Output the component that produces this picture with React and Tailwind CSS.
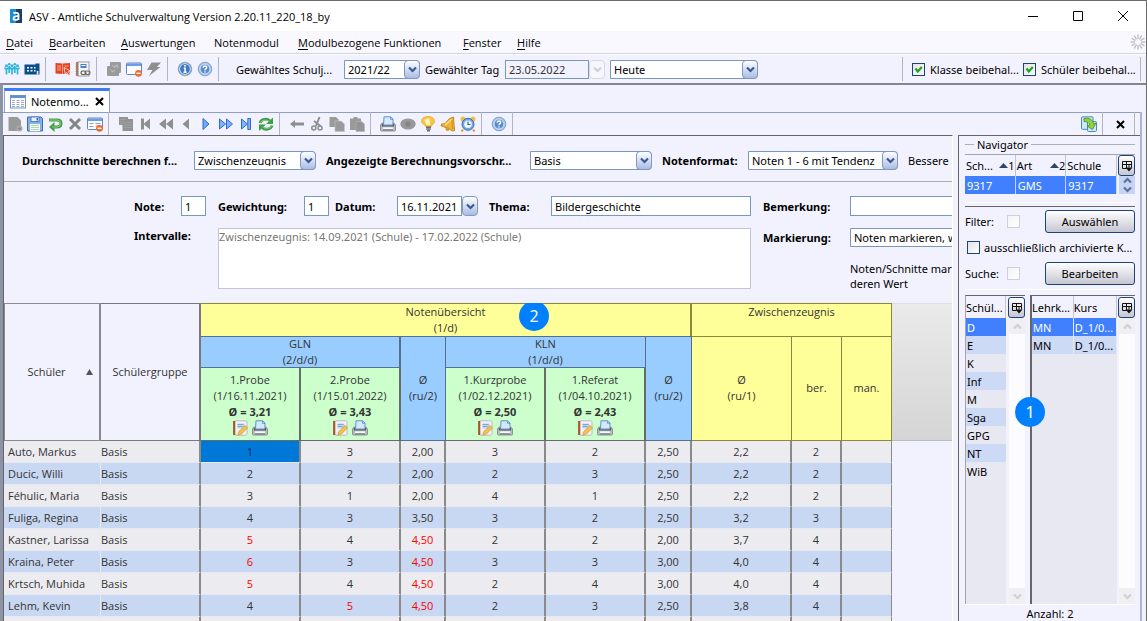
import React, { useState } from 'react';
import clsx from 'clsx';

const menus = [
  { key: 'D', rest: 'atei', width: 'w-[43px]' },
  { key: 'B', rest: 'earbeiten', width: 'w-[72px]' },
  { key: 'A', rest: 'uswertungen', width: 'w-[93px]' },
  { key: '', rest: 'Notenmodul', width: 'w-[84px]' },
  { key: 'M', rest: 'odulbezogene Funktionen', width: 'w-[165px]' },
  { key: 'F', rest: 'enster', width: 'w-[54px]' },
  { key: 'H', rest: 'ilfe', width: 'w-[40px]' },
];

const students = [
  { name: 'Auto, Markus', grades: ['1', '3', '2,00', '3', '2', '2,50', '2,2', '2', ''] },
  { name: 'Ducic, Willi', grades: ['2', '2', '2,00', '2', '3', '2,50', '2,2', '2', ''] },
  { name: 'Féhulic, Maria', grades: ['3', '1', '2,00', '4', '1', '2,50', '2,2', '2', ''] },
  { name: 'Fuliga, Regina', grades: ['4', '3', '3,50', '3', '2', '2,50', '3,2', '3', ''] },
  { name: 'Kastner, Larissa', grades: ['5', '4', '4,50', '2', '2', '2,00', '3,7', '4', ''] },
  { name: 'Kraina, Peter', grades: ['6', '3', '4,50', '3', '3', '3,00', '4,0', '4', ''] },
  { name: 'Krtsch, Muhida', grades: ['5', '4', '4,50', '2', '4', '3,00', '4,0', '4', ''] },
  { name: 'Lehm, Kevin', grades: ['4', '5', '4,50', '2', '3', '2,50', '3,8', '4', ''] },
  { name: '', grades: ['', '', '', '', '', '', '', '', ''] },
];

const subjects = ['D', 'E', 'K', 'Inf', 'M', 'Sga', 'GPG', 'NT', 'WiB'];

const isWeak = (grade) => parseFloat(grade.replace(',', '.')) >= 4.5;

/* ---------- Icons ---------- */

const Icon = ({ children, size = 16 }) => (
  <svg width={size} height={size} viewBox="0 0 16 16" fill="none" aria-hidden="true" className="block shrink-0">
    {children}
  </svg>
);

const AppLogo = () => (
  <Icon>
    <rect x="2" y="1" width="12" height="14" fill="#1b8fd0" />
    <path d="M8 1h6v14H8z" fill="#17406f" />
    <path d="M5.500 5.500c1-1 5-1.300 5 1.200V12M10.500 8.300c-3-.3-5 .2-5 2 0 2.200 4 2.200 5 0" stroke="#fff" strokeWidth="1.800" />
  </Icon>
);

const PeopleIcon = () => (
  <Icon>
    <g fill="#2fb5d8">
      {[2.500, 8, 13.500].map((x) => <circle key={x} cx={x} cy="4.800" r="1.500" />)}
      {[5.200, 10.800].map((x) => <circle key={x} cx={x} cy="3.200" r="1.300" />)}
    </g>
    <path d="M.5 6.500l2 2 2-2M2.500 7.500v6M5.800 6.500l2.200 2 2.200-2M8 8v5.500M11.500 6.500l2 2 2-2M13.500 7.500v6M5.200 5v7M10.800 5v7" stroke="#2fb5d8" strokeWidth="1.700" />
  </Icon>
);

const SchoolIcon = () => (
  <Icon>
    <path d="M.5 3.500h11v-1h4v11H.5z" fill="#0b4f8a" />
    <path d="M3 6h2v1.500H3zM6.500 6h2v1.500h-2zM10 6h1.500v1.500H10zM3 9h2v1.500H3zM6.500 9h2v1.500h-2zM10 9h1.500v1.500H10zM12.800 10h1.500v3.500h-1.500z" fill="#fff" />
  </Icon>
);

const RedBookIcon = () => (
  <Icon>
    <path d="M.5 2l7 .5v10.500l-7-.5zM8 2.500l7-.5v10.500L8 13z" fill="#e2431e" />
    <path d="M2 5h4M2 7h4M2 9h4M9.500 5h4" stroke="#f8b8a4" strokeWidth=".9" />
    <path d="M9 6.500l6.500 3.500-2.300.5 2 3-1.400 1-2-3-1.600 1.600z" fill="#e2431e" stroke="#fff" strokeWidth=".7" />
  </Icon>
);

const NotebookIcon = () => (
  <Icon>
    <rect x="3" y="1" width="11" height="14" fill="#f7f7f7" stroke="#9a9a9a" />
    <path d="M2 1v14" stroke="#a4562e" strokeWidth="1.500" />
    <path d="M.5 3h3M.5 5.500h3M.5 8h3M.5 10.500h3M.5 13h3" stroke="#888" strokeWidth=".8" />
    <path d="M5.500 3h6v4h-6z" fill="#4a7fd0" />
    <path d="M6.500 4.500h4" stroke="#fff" />
    <rect x="6" y="10" width="5" height="3.500" rx="1.700" stroke="#555" strokeWidth="1.200" />
    <rect x="10" y="10" width="5" height="3.500" rx="1.700" stroke="#666" strokeWidth="1.200" />
  </Icon>
);

const GreyCardsIcon = () => (
  <Icon>
    <path d="M5 1h9q1 0 1 1v9q0 1-1 1h-1v2q0 1-1 1H2q-1 0-1-1V6q0-1 1-1h2V2q0-1 1-1z" fill="#9a9a9a" />
    <path d="M4.500 8.500l2 2.500 2.500-2M8 6.500l3-2.500 1 3M6 5h3" stroke="#b9b9b9" strokeWidth="1.200" />
  </Icon>
);

const WindowMinusIcon = ({ lines }) => (
  <Icon>
    <rect x=".5" y="2" width="15" height="11.500" rx="1" fill="#fdfdff" stroke="#5c86c4" />
    <path d="M1 2.500h14V5H1z" fill="#6c9ce4" />
    {lines && <path d="M2.500 7.500h4M8.500 7.500h5M2.500 10.500h4M8.500 10h2" stroke="#8ba1c8" />}
    <circle cx="12.500" cy="12.300" r="3.400" fill="#ee6a2c" />
    <path d="M10.500 12.300h4" stroke="#fff" strokeWidth="1.400" />
  </Icon>
);

const BoltIcon = () => (
  <Icon>
    <path d="M5.500 1.500H15l-4 4.500h3.500L3 15l3.500-6H1z" fill="#8f8f8f" />
  </Icon>
);

const RoundIcon = ({ children }) => (
  <Icon>
    <circle cx="8" cy="8" r="6.800" fill="#5b8fd0" stroke="#8fa6c6" />
    <circle cx="8" cy="8" r="5.400" fill="#4479bd" stroke="#e4eefb" strokeWidth=".9" />
    {children}
  </Icon>
);

const InfoIcon = () => (
  <RoundIcon>
    <path d="M8 4v1.800M6.800 7.200h1.300v3.800M6.500 11.200h3.200" stroke="#fff" strokeWidth="1.500" />
  </RoundIcon>
);

const HelpIcon = () => (
  <Icon>
    <circle cx="8" cy="8" r="6.800" fill="#a8c6ea" stroke="#7da0cc" />
    <circle cx="8" cy="8" r="4.900" fill="#5a8ccb" stroke="#e4eefb" strokeWidth=".8" />
    <path d="M6.200 6.700c0-2.300 3.700-2.200 3.500-.1C9.600 7.800 8 7.600 8 9.200M8 10.300v1.300" stroke="#fff" strokeWidth="1.400" />
  </Icon>
);

const SheetIcon = () => (
  <Icon>
    <rect x=".5" y="1.500" width="15" height="12.500" fill="#fff" stroke="#6d93cb" />
    <path d="M1 2h14v2H1z" fill="#5f8fd6" />
    <path d="M2 6.500h3M6.500 6.500h3M11 6.500h3M2 8.500h3M6.500 8.500h3M11 8.500h3M2 10.500h3M6.500 10.500h3M11 10.500h3M2 12.500h3M6.500 12.500h3M11 12.500h3" stroke="#a4a9bd" />
  </Icon>
);

const NewPageIcon = () => (
  <Icon>
    <path d="M1.500 1h9l3.500 3.500V15h-12.500z" fill="#999" />
    <circle cx="12.500" cy="12.500" r="3" fill="#a9a9a9" />
    <path d="M11 12.500h3M12.500 11v3" stroke="#888" />
  </Icon>
);

const SaveIcon = () => (
  <Icon>
    <path d="M1 1h13l1.500 1.500V15H.5V1z" fill="#7fb0e6" stroke="#3d6cb5" />
    <path d="M4 1h8v4.500H4z" fill="#e8f2fc" stroke="#3d6cb5" strokeWidth=".8" />
    <path d="M9.500 2h1.500v2.500H9.500z" fill="#3d6cb5" />
    <path d="M3 8h10v7H3z" fill="#f7fbf4" />
    <path d="M4 9.500h8M4 11.500h8M4 13.500h8" stroke="#b3d3a8" />
  </Icon>
);

const UndoIcon = () => (
  <Icon>
    <path d="M2 4h8q4 0 4 3.500T10 11H6" stroke="#43a047" strokeWidth="3" />
    <path d="M7.500 6v10L2 11z" fill="#43a047" />
    <path d="M2.500 4h7.500q3.500 0 3.500 3.500T10 11H5" stroke="#8fd08c" strokeWidth=".9" />
  </Icon>
);

const CrossIcon = () => (
  <Icon>
    <path d="M3 3l10 10M13 3L3 13" stroke="#858585" strokeWidth="3" />
  </Icon>
);

const GreyListIcon = () => (
  <Icon>
    <path d="M1 1h9v2h5v12H4.500V9H1z" fill="#929292" />
    <path d="M2 3.500h6M2 5.500h3M2 7.500h3M6 6.500h8M6 9h8M6 11.500h8" stroke="#a6a6a6" strokeWidth=".7" />
  </Icon>
);

const grey = '#8f8f8f';
const FirstIcon = () => <Icon><path d="M3 2.500h3v5l6-5v11l-6-5v5H3z" fill={grey} /></Icon>;
const RewindIcon = () => <Icon><path d="M8 2.500v11L1 8zM15 2.500v11L8 8z" fill={grey} /></Icon>;
const PrevIcon = () => <Icon><path d="M11 2.500v11L4.500 8z" fill={grey} /></Icon>;
const PlayIcon = () => <Icon><path d="M5 2.500v11L11 8z" fill="#6fabf4" stroke="#2b6bd0" /></Icon>;
const ForwardIcon = () => <Icon><path d="M1.500 3v10l6-5zM8.500 3v10l6-5z" fill="#7fb4f6" stroke="#2b6bd0" /></Icon>;
const LastIcon = () => <Icon><path d="M3.500 3v10l6-5zM9.800 2.500h2.700v11H9.800z" fill="#7fb4f6" stroke="#2b6bd0" /></Icon>;

const RefreshIcon = () => (
  <Icon>
    <path d="M2 7c1-4 7-5 10-2" stroke="#3f9d45" strokeWidth="2.800" />
    <path d="M15 1.500V8H8z" fill="#3f9d45" />
    <path d="M14 9.500c-1 4-7 5-10 2" stroke="#3f9d45" strokeWidth="2.800" />
    <path d="M1 15V8.500h7z" fill="#3f9d45" />
    <path d="M2.500 6.500c1.500-2.500 5.500-3.300 9-1M13.500 10c-1.500 2.500-5.500 3.300-9 1" stroke="#8fd08c" strokeWidth="1" />
  </Icon>
);

const BackArrowIcon = () => <Icon><path d="M1 8l5-4v2.500h9v3H6V12z" fill={grey} /></Icon>;

const ScissorsIcon = () => (
  <Icon>
    <path d="M10.500 1L7 10M5 5l6.500 5" stroke={grey} strokeWidth="2" />
    <circle cx="4.800" cy="12" r="2" stroke={grey} strokeWidth="1.600" />
    <circle cx="11" cy="12" r="2" stroke={grey} strokeWidth="1.600" />
  </Icon>
);

const CopyIcon = () => (
  <Icon>
    <path d="M.5 1h6.500l2.500 2.500V11H.5z" fill="#9a9a9a" />
    <path d="M6 5h6l3.500 3v7.500H6z" fill="#9a9a9a" stroke="#c4c4ca" strokeWidth=".6" />
  </Icon>
);

const PasteIcon = () => (
  <Icon>
    <path d="M1 2.500h3.500V1h4v1.500H12V14H1z" fill="#9a9a9a" />
    <path d="M7 5.500h5.500L15.500 8v7.500H7z" fill="#959595" stroke="#b4b4ba" strokeWidth=".6" />
  </Icon>
);

const PrinterIcon = () => (
  <Icon>
    <path d="M2 7h12l1.500 2v5q0 1-1 1h-13q-1 0-1-1V9z" fill="#b9bcc2" stroke="#7c8088" strokeWidth=".8" />
    <path d="M4 .8h6.500L13 3v6H3.500z" fill="#d3e9fd" stroke="#5688c4" strokeWidth=".9" />
    <path d="M10.500 1v2.300H13" stroke="#5688c4" strokeWidth=".8" />
    <path d="M2.500 8v2h11V8" stroke="#53575e" strokeWidth="1.200" />
    <path d="M3 11.300h10v1.700H3z" fill="#f6f7f9" />
    <path d="M3 14h10" stroke="#6f737a" />
  </Icon>
);

const EyeIcon = () => (
  <Icon>
    <ellipse cx="8" cy="8" rx="7.700" ry="5.600" fill="#989898" />
    <circle cx="8" cy="8" r="2.600" fill="#858585" />
  </Icon>
);

const BulbIcon = () => (
  <Icon>
    <path d="M8 .5c4 0 6.500 2 6.500 4.800 0 3-3 3-3.500 5.700H6C5.500 8.300 1.500 8.300 1.500 5.300 1.500 2.500 4 .5 8 .5z" fill="#fbc63d" stroke="#e9a02a" strokeWidth=".7" />
    <path d="M4 4q1.500-2 5.500-1.500L10 9H7z" fill="#fff3c0" />
    <path d="M6 11.300h5M6.200 13h4.600M7 14.800h3" stroke="#6b6b72" strokeWidth="1.500" />
  </Icon>
);

const BellIcon = () => (
  <Icon>
    <path d="M13.500 1l1 13.500-2 .5-4-2.500L1 9.800l.5-1.800L5 7.500l4.500-5z" fill="#efb437" stroke="#b3760f" strokeWidth=".8" />
    <path d="M11.500 3.500L5 9" stroke="#fbe08a" strokeWidth="1.600" />
    <path d="M12 4l.5 9.500" stroke="#d4901a" strokeWidth="1" />
    <circle cx="7.500" cy="13" r="2" fill="#d99a22" />
  </Icon>
);

const AlarmIcon = () => (
  <Icon>
    <circle cx="3" cy="3" r="2.500" fill="#f3bd45" />
    <circle cx="13" cy="3" r="2.500" fill="#f3bd45" />
    <path d="M3 13.500L1.500 15.500M13 13.500l1.500 2" stroke="#d89b2b" strokeWidth="2" />
    <circle cx="8" cy="8.300" r="6" fill="#6fa8e6" stroke="#3b6fb4" />
    <circle cx="8" cy="8.300" r="3.800" fill="#eef6ff" />
    <path d="M8 5.500v3h2.500" stroke="#3b5f94" strokeWidth="1.200" />
  </Icon>
);

const SwapIcon = () => (
  <Icon>
    <rect x=".5" y=".8" width="11.500" height="12.500" rx="1" fill="#cfe6f8" stroke="#4b8ac0" />
    <rect x="6.500" y="5.500" width="9" height="10" rx="1" fill="#cfe6f8" stroke="#4b8ac0" />
    <path d="M3 2.500c5.500-1 9 1.500 9.500 5.500l2.500-1-3.500 6.500L6 10l2.800-.8C8.500 7 6.500 5.500 3 5.500z" fill="#8ed43c" stroke="#3f8d1d" strokeWidth=".8" />
  </Icon>
);

const NoteEditIcon = () => (
  <Icon>
    <rect x="2" y=".8" width="13" height="14.400" rx="1.500" fill="#f4f4f6" stroke="#b9b9c2" />
    <path d="M2.200 1v14" stroke="#a5582c" strokeWidth="2.200" />
    <path d="M5.500 3.500h7v5h-7z" fill="#bcd5f3" />
    <path d="M5.500 4.500h6M5.500 6.500h5" stroke="#6f9bd4" strokeWidth=".8" />
    <path d="M13 5.500l2.500 2.300-6 6.200-3.700 1.200 1-3.700z" fill="#f6c04c" stroke="#c98f2c" strokeWidth=".6" />
  </Icon>
);

const SpinnerIcon = () => (
  <Icon>
    {[0, 30, 60, 90, 120, 150, 180, 210, 240, 270, 300, 330].map((deg) => (
      <path key={deg} d="M8 .5v4.500" stroke="#b9b9bd" strokeWidth="1.300" transform={`rotate(${deg} 8 8)`} />
    ))}
  </Icon>
);

const Chevron = ({ up, className }) => (
  <svg width="9" height="7" viewBox="0 0 9 7" fill="none" aria-hidden="true" className={className}>
    <path d={up ? 'M1 5.500L4.500 2 8 5.500' : 'M1 1.500L4.500 5 8 1.500'} stroke="currentColor" strokeWidth="2.200" />
  </svg>
);

const ColumnsIcon = () => (
  <svg width="12" height="12" viewBox="0 0 12 12" fill="none" aria-hidden="true">
    <path d="M1.500 8.500v-7h9v6M1.500 8.500h4M1.500 4.500h9M5.500 1.500v7M8 4.500v3" stroke="#111" />
    <path d="M4.500 7.500h7L8 11.500z" fill="#111" />
  </svg>
);

/* ---------- Controls ---------- */

const ToolButton = ({ label, icon: Glyph, ...rest }) => (
  <button type="button" aria-label={label} title={label} className="shrink-0">
    <Glyph {...rest} />
  </button>
);

const Separator = () => <span className="ml-px mr-[5px] h-6 w-px shrink-0 bg-[#b4b4bc]" />;

const DropArrow = ({ disabled }) => (
  <span
    className={clsx(
      'flex w-4 items-center justify-center rounded-sm border',
      disabled
        ? 'border-[#d8d8e4] bg-[#f6f6fc] text-[#cfcfda]'
        : 'border-[#8099c0] bg-linear-to-b from-white to-[#a9bce6] text-[#3d5a8c]'
    )}
  >
    <Chevron />
  </span>
);

const Dropdown = ({ id, value, className }) => (
  <span className={clsx('relative flex h-[19px] shrink-0', className)}>
    <select id={id} defaultValue={value} className="w-full appearance-none rounded-r-sm border border-[#7a98be] bg-white pl-[3px] pr-4 leading-none text-black">
      <option>{value}</option>
    </select>
    <span className="pointer-events-none absolute inset-y-0 right-0 flex">
      <DropArrow />
    </span>
  </span>
);

const DateField = ({ id, value, disabled, className }) => (
  <span className={clsx('flex shrink-0', className)}>
    <input
      id={id}
      defaultValue={value}
      disabled={disabled}
      className={clsx('min-w-0 flex-1 border border-[#7a98be] px-[3px]', disabled ? 'bg-[#f2f2ff] text-[#333]' : 'bg-white')}
    />
    <button type="button" aria-label="Kalender öffnen" disabled={disabled} className="flex">
      <DropArrow disabled={disabled} />
    </button>
  </span>
);

const TextField = ({ id, value = '', className }) => (
  <input id={id} defaultValue={value} className={clsx('h-5 shrink-0 border border-[#7a98be] bg-white px-[3px]', className)} />
);

const Checkbox = ({ id, checked, disabled }) => (
  <span className="relative flex shrink-0">
    <input
      id={id}
      type="checkbox"
      defaultChecked={checked}
      disabled={disabled}
      className="peer size-[13px] appearance-none border border-[#1c4478] bg-linear-to-br from-[#e3e3e3] to-white disabled:border-[#cfcfda] disabled:from-[#f4f4f6]"
    />
    <svg viewBox="0 0 13 13" className="pointer-events-none absolute inset-0 hidden size-[13px] peer-checked:block" fill="none" aria-hidden="true">
      <path d="M3.500 5.500L5.800 8.500 9.800 4" stroke="#21a121" strokeWidth="2.200" />
    </svg>
  </span>
);

const PanelButton = ({ children }) => (
  <button type="button" className="h-[23px] w-[90px] rounded-[3px] border border-[#1c4478] bg-linear-to-b from-white to-[#c6c6d2]">
    {children}
  </button>
);

const ColumnsButton = () => (
  <button type="button" aria-label="Spalten wählen" className="flex h-[21px] w-[17px] shrink-0 items-center justify-center rounded-[3px] border border-[#1c4478] bg-linear-to-b from-white to-[#c6c6d2]">
    <ColumnsIcon />
  </button>
);

const Badge = ({ children, className }) => (
  <span className={clsx('absolute z-10 flex size-[30px] items-center justify-center rounded-full bg-[#0080ff] text-base text-white', className)}>
    {children}
  </span>
);

/* ---------- Window bars ---------- */

const TitleBar = () => (
  <header className="flex h-[30px] shrink-0 items-center bg-white pl-2 font-['Open_Sans',sans-serif]">
    <AppLogo />
    <h1 className="ml-[5px] flex-1">ASV - Amtliche Schulverwaltung Version 2.20.11_220_18_by</h1>
    <button type="button" aria-label="Minimieren" className="flex w-[45px] justify-center">
      <svg width="10" height="10" stroke="#000" fill="none"><path d="M0 5.500h10" /></svg>
    </button>
    <button type="button" aria-label="Maximieren" className="flex w-[45px] justify-center">
      <svg width="10" height="10" stroke="#000" fill="none"><path d="M.5.5h9v9h-9z" /></svg>
    </button>
    <button type="button" aria-label="Schließen" className="flex w-[46px] justify-center">
      <svg width="10" height="10" stroke="#000" fill="none"><path d="M0 0l10 10M10 0L0 10" /></svg>
    </button>
  </header>
);

const MenuBar = () => (
  <nav className="flex h-[23px] shrink-0 items-center border-b border-[#d3d3e2] bg-[#f8f8fe] pl-1.5 font-['Open_Sans',sans-serif]">
    {menus.map(({ key, rest, width }) => (
      <button key={rest} type="button" className={clsx('text-left whitespace-nowrap', width)}>
        <span className="underline underline-offset-2">{key}</span>
        {rest}
      </button>
    ))}
    <span className="ml-auto">
      <SpinnerIcon />
    </span>
  </nav>
);

const MainToolbar = () => (
  <div className="flex h-[29px] shrink-0 items-center gap-1 border-t border-white pl-1">
    <ToolButton label="Klassen" icon={PeopleIcon} />
    <ToolButton label="Schulen" icon={SchoolIcon} />
    <Separator />
    <ToolButton label="Unterricht" icon={RedBookIcon} />
    <ToolButton label="Notizen" icon={NotebookIcon} />
    <Separator />
    <ToolButton label="Karten" icon={GreyCardsIcon} />
    <ToolButton label="Fenster schließen" icon={WindowMinusIcon} />
    <ToolButton label="Aktion" icon={BoltIcon} />
    <Separator />
    <ToolButton label="Information" icon={InfoIcon} />
    <ToolButton label="Hilfe" icon={HelpIcon} />
    <Separator />
    <div className="ml-2 flex items-center">
      <label htmlFor="schuljahr" className="w-[108px]">Gewähltes Schulj...</label>
      <Dropdown id="schuljahr" value="2021/22" className="w-[76px]" />
      <label htmlFor="tag" className="ml-[5px] w-20 whitespace-nowrap">Gewählter Tag</label>
      <DateField id="tag" value="23.05.2022" disabled className="h-[19px] w-[100px]" />
      <Dropdown id="heute" value="Heute" className="ml-[5px] w-[148px]" />
    </div>
    <div className="ml-auto flex items-center whitespace-nowrap">
      <Separator />
      <span className="ml-1">
        <Checkbox id="klasse" checked />
      </span>
      <label htmlFor="klasse" className="ml-[5px] w-[93px]">Klasse beibehal...</label>
      <Checkbox id="schueler" checked />
      <label htmlFor="schueler" className="ml-[5px] w-[98px]">Schüler beibehal...</label>
      <Separator />
    </div>
  </div>
);

const ModuleTab = () => (
  <div className="flex h-[27px] shrink-0 items-end">
    <div className="ml-px flex h-6 w-[106px] items-center border-x border-t-[3px] border-x-[#8ca0c4] border-t-[#3d7bf5] bg-white pl-[5px]">
      <SheetIcon />
      <span className="ml-[5px] flex-1">Notenmo...</span>
      <button type="button" aria-label="Tab schließen" className="mr-[5px]">
        <svg width="9" height="9" fill="none" stroke="#000" strokeWidth="2"><path d="M1 1l7 7M8 1L1 8" /></svg>
      </button>
    </div>
  </div>
);

const ModuleToolbar = () => (
  <div className="flex h-[23px] shrink-0 items-center gap-1 border-t border-[#8ca0c4] pl-1">
    <ToolButton label="Neu" icon={NewPageIcon} />
    <ToolButton label="Speichern" icon={SaveIcon} />
    <ToolButton label="Rückgängig" icon={UndoIcon} />
    <ToolButton label="Löschen" icon={CrossIcon} />
    <ToolButton label="Schließen" icon={WindowMinusIcon} lines />
    <Separator />
    <ToolButton label="Liste" icon={GreyListIcon} />
    <ToolButton label="Erster" icon={FirstIcon} />
    <ToolButton label="Weit zurück" icon={RewindIcon} />
    <ToolButton label="Zurück" icon={PrevIcon} />
    <ToolButton label="Weiter" icon={PlayIcon} />
    <ToolButton label="Weit vor" icon={ForwardIcon} />
    <ToolButton label="Letzter" icon={LastIcon} />
    <ToolButton label="Aktualisieren" icon={RefreshIcon} />
    <Separator />
    <ToolButton label="Verschieben" icon={BackArrowIcon} />
    <ToolButton label="Ausschneiden" icon={ScissorsIcon} />
    <ToolButton label="Kopieren" icon={CopyIcon} />
    <ToolButton label="Einfügen" icon={PasteIcon} />
    <Separator />
    <ToolButton label="Drucken" icon={PrinterIcon} />
    <ToolButton label="Ansicht" icon={EyeIcon} />
    <ToolButton label="Hinweis" icon={BulbIcon} />
    <ToolButton label="Benachrichtigung" icon={BellIcon} />
    <ToolButton label="Erinnerung" icon={AlarmIcon} />
    <Separator />
    <ToolButton label="Hilfe" icon={HelpIcon} />
    <Separator />
    <div className="ml-auto flex items-center gap-1">
      <ToolButton label="Wechseln" icon={SwapIcon} />
      <Separator />
      <button type="button" aria-label="Modul schließen" className="mx-1">
        <svg width="9" height="9" fill="none" stroke="#000" strokeWidth="2"><path d="M1 1l7 7M8 1L1 8" /></svg>
      </button>
      <Separator />
    </div>
  </div>
);

/* ---------- Form ---------- */

const FilterRow = () => (
  <div className="flex h-[46px] items-center border-b border-[#b0b0b4] pt-[3px] pl-[18px] whitespace-nowrap *:shrink-0">
    <label htmlFor="durchschnitte" className="w-[172px] font-bold">Durchschnitte berechnen f...</label>
    <Dropdown id="durchschnitte" value="Zwischenzeugnis" className="w-[122px]" />
    <label htmlFor="vorschrift" className="ml-2.5 w-[204px] font-bold">Angezeigte Berechnungsvorschr...</label>
    <Dropdown id="vorschrift" value="Basis" className="w-[122px]" />
    <label htmlFor="format" className="ml-2.5 w-[86px] font-bold">Notenformat:</label>
    <Dropdown id="format" value="Noten 1 - 6 mit Tendenz" className="w-[150px]" />
    <span className="ml-2.5">Bessere N</span>
  </div>
);

const ExamForm = () => (
  <div className="h-[121px] pt-3.5 pl-[130px] whitespace-nowrap">
    <div className="flex items-center *:shrink-0">
      <label htmlFor="note" className="w-[47px] font-bold">Note:</label>
      <TextField id="note" value="1" className="w-[25px]" />
      <label htmlFor="gewichtung" className="ml-3 w-[86px] font-bold">Gewichtung:</label>
      <TextField id="gewichtung" value="1" className="w-[25px]" />
      <label htmlFor="datum" className="ml-1.5 w-[62px] font-bold">Datum:</label>
      <DateField id="datum" value="16.11.2021" className="h-5 w-[81px]" />
      <label htmlFor="thema" className="ml-[11px] w-[62px] font-bold">Thema:</label>
      <TextField id="thema" value="Bildergeschichte" className="w-[200px]" />
      <label htmlFor="bemerkung" className="ml-3 w-[87px] font-bold">Bemerkung:</label>
      <TextField id="bemerkung" className="w-[200px]" />
    </div>
    <div className="mt-3 flex *:shrink-0">
      <label htmlFor="intervalle" className="w-[84px] font-bold">Intervalle:</label>
      <textarea
        id="intervalle"
        disabled
        defaultValue="Zwischenzeugnis: 14.09.2021 (Schule) - 17.02.2022 (Schule)"
        className="h-[61px] w-[533px] resize-none border border-[#c6c6d2] bg-white text-[#777]"
      />
      <label htmlFor="markierung" className="ml-3 w-[87px] pt-0.5 font-bold">Markierung:</label>
      <div>
        <Dropdown id="markierung" value="Noten markieren, wenn" className="w-[200px]" />
        <p className="mt-3.5">Noten/Schnitte mark<br />deren Wert</p>
      </div>
    </div>
  </div>
);

/* ---------- Grade table ---------- */

const ExamHead = ({ title, date, average }) => (
  <th scope="col" className="h-[73px] border-r-2 border-b border-[#666d66] bg-[#ccffcc] font-normal">
    {title}
    <br />
    {date}
    <br />
    <b>Ø = {average}</b>
    <span className="flex justify-center gap-1">
      <button type="button" aria-label={`${title} bearbeiten`}><NoteEditIcon /></button>
      <button type="button" aria-label={`${title} drucken`}><PrinterIcon /></button>
    </span>
  </th>
);

const GradeTable = () => {
  const [selected, setSelected] = useState('0-0');

  return (
    <div className="flex flex-1 overflow-hidden">
      <table className="w-[888px] shrink-0 table-fixed border-separate border-spacing-0 self-start text-center font-['Open_Sans',sans-serif] leading-4 text-[#333]">
        <colgroup>
          <col className="w-[97px]" />
          <col className="w-[100px]" />
          <col className="w-[100px]" />
          <col className="w-[100px]" />
          <col className="w-[45px]" />
          <col className="w-[100px]" />
          <col className="w-[100px]" />
          <col className="w-[46px]" />
          <col className="w-[100px]" />
          <col className="w-[50px]" />
          <col className="w-[50px]" />
        </colgroup>
        <thead>
          <tr>
            <th scope="col" rowSpan={3} className="border-t border-r-2 border-b border-l border-[#8a8a90] font-normal">
              <span className="flex items-center justify-center gap-5 pl-4">
                Schüler
                <svg width="7" height="6" aria-hidden="true"><path d="M3.500 0L7 6H0z" fill="#555" /></svg>
              </span>
            </th>
            <th scope="col" rowSpan={3} className="border-t border-r-2 border-b border-[#77777d] font-normal">Schülergruppe</th>
            <th scope="colgroup" colSpan={6} className="relative border-t border-r-2 border-[#8a8a3a] bg-[#ffff99] align-top font-normal">
              Notenübersicht
              <br />
              (1/d)
              <Badge className="-top-[3px] left-[318px]">2</Badge>
            </th>
            <th scope="colgroup" colSpan={3} className="border-t border-r border-[#8a8a3a] bg-[#ffff99] align-top font-normal">Zwischenzeugnis</th>
          </tr>
          <tr>
            <th scope="colgroup" colSpan={2} className="border-r-2 border-[#55708c] bg-[#99ccff] font-normal shadow-[inset_0_1px_#55708c,inset_0_-1px_#55708c]">GLN<br />(2/d/d)</th>
            <th scope="col" rowSpan={2} className="border-r border-b border-[#55708c] bg-[#99ccff] font-normal shadow-[inset_0_1px_#55708c]">Ø<br />(ru/2)</th>
            <th scope="colgroup" colSpan={2} className="border-r border-[#55708c] bg-[#99ccff] font-normal shadow-[inset_0_1px_#55708c,inset_0_-1px_#55708c]">KLN<br />(1/d/d)</th>
            <th scope="col" rowSpan={2} className="border-r border-b border-[#55708c] bg-[#99ccff] font-normal shadow-[inset_0_1px_#55708c]">Ø<br />(ru/2)</th>
            <th scope="col" rowSpan={2} className="border-r border-b border-[#8a8a3a] bg-[#ffff99] font-normal shadow-[inset_0_1px_#8a8a3a]">Ø<br />(ru/1)</th>
            <th scope="col" rowSpan={2} className="border-r border-b border-[#8a8a3a] bg-[#ffff99] font-normal shadow-[inset_0_1px_#8a8a3a]">ber.</th>
            <th scope="col" rowSpan={2} className="border-r border-b border-[#8a8a3a] bg-[#ffff99] font-normal shadow-[inset_0_1px_#8a8a3a]">man.</th>
          </tr>
          <tr>
            <ExamHead title="1.Probe" date="(1/16.11.2021)" average="3,21" />
            <ExamHead title="2.Probe" date="(1/15.01.2022)" average="3,43" />
            <ExamHead title="1.Kurzprobe" date="(1/02.12.2021)" average="2,50" />
            <ExamHead title="1.Referat" date="(1/04.10.2021)" average="2,43" />
          </tr>
        </thead>
        <tbody>
          {students.map((student, row) => (
            <tr key={row} className="odd:bg-[#ececf0] even:bg-[#c8d8f2]">
              <th scope="row" className="h-[22px] border-r border-b border-[#e6e8f4] pl-1 text-left font-normal">{student.name}</th>
              <td className="border-r-2 border-b border-r-[#8a8a8a] border-b-[#e6e8f4] text-left">{student.name && 'Basis'}</td>
              {student.grades.map((grade, col) => (
                <td
                  key={col}
                  onClick={() => setSelected(`${row}-${col}`)}
                  className={clsx(
                    'border-b border-r-[#8a8a8a] border-b-[#e6e8f4]',
                    col === 8 ? 'border-r' : 'border-r-2',
                    isWeak(grade) && col < 3 && 'text-[#f00]',
                    selected === `${row}-${col}` && 'bg-[#0078d7] text-[#002b55]'
                  )}
                >
                  {grade}
                </td>
              ))}
            </tr>
          ))}
        </tbody>
      </table>
      <div className="h-[138px] flex-1 border-y border-t-[#dedee6] border-b-[#bcbcc0] bg-linear-to-b from-[#eaeaea] to-[#d5d5d5]" />
    </div>
  );
};

/* ---------- Navigator ---------- */

const SortMark = ({ order }) => (
  <span className="flex items-center">
    <svg width="9" height="5" aria-hidden="true"><path d="M4.500 0L9 5H0z" fill="#2d4568" /></svg>
    {order}
  </span>
);

const ScrollTrack = () => (
  <div className="flex w-4 flex-1 flex-col items-center justify-between bg-[#fcfcfe] text-[#cfcfd4]">
    <button type="button" aria-label="Nach oben" className="flex size-4 items-center justify-center bg-[#f0f0f3]"><Chevron up /></button>
    <button type="button" aria-label="Nach unten" className="flex size-4 items-center justify-center bg-[#f0f0f3]"><Chevron /></button>
  </div>
);

const SchoolTable = () => (
  <div className="flex border-t border-[#a4a4ac]">
    <table className="w-full table-fixed border-separate border-spacing-0 text-left">
      <thead>
        <tr className="h-[21px] *:border-r *:border-[#c4c4cc] *:p-0 *:pl-px *:font-normal">
          <th scope="col"><span className="flex justify-between">Sch... <SortMark order="1" /></span></th>
          <th scope="col"><span className="flex justify-between">Art <SortMark order="2" /></span></th>
          <th scope="col">Schule</th>
        </tr>
      </thead>
      <tbody>
        <tr className="h-[18px] bg-[#4080ff] text-white *:border-r *:border-[#c4d6ff] *:p-0 *:pl-0.5">
          <td>9317</td>
          <td>GMS</td>
          <td>9317</td>
        </tr>
      </tbody>
    </table>
    <div className="flex w-[18px] shrink-0 flex-col items-end">
      <ColumnsButton />
      <button type="button" aria-label="Vorherige" className="flex h-[9px] w-4 items-center justify-center bg-[#c6d3f2] text-[#5a739c]"><Chevron up /></button>
      <button type="button" aria-label="Nächste" className="flex h-[9px] w-4 items-center justify-center bg-[#c6d3f2] text-[#5a739c]"><Chevron /></button>
    </div>
  </div>
);

const SubjectTable = () => (
  <div className="flex w-[60px] shrink-0 border-t border-l border-t-[#66666a] border-l-[#a4a4ac] bg-[#e8e8f2]">
    <table className="w-10 self-start border-separate border-spacing-0 text-left">
      <thead>
        <tr className="h-[22px] bg-[#f2f2ff]">
          <th scope="col" className="border-r border-[#c4c4cc] p-0 font-normal">Schül...</th>
        </tr>
      </thead>
      <tbody>
        {subjects.map((subject, i) => (
          <tr key={subject} className={clsx('h-[18px]', i === 0 ? 'bg-[#4080ff] text-white' : i % 2 === 1 && 'bg-[#ccdaf6]')}>
            <td className="p-0 pl-px">{subject}</td>
          </tr>
        ))}
      </tbody>
    </table>
    <div className="flex flex-1 flex-col items-end bg-[#f2f2ff] pt-px">
      <ColumnsButton />
      <ScrollTrack />
    </div>
  </div>
);

const CourseTable = () => (
  <div className="flex min-w-0 flex-1 border-t border-l-2 border-[#66666a] bg-[#e8e8f2]">
    <table className="flex-1 table-fixed self-start border-separate border-spacing-0 text-left whitespace-nowrap">
      <thead>
        <tr className="h-[22px] bg-[#f2f2ff] *:border-r *:border-[#c4c4cc] *:p-0 *:font-normal">
          <th scope="col">Lehrk...</th>
          <th scope="col">Kurs</th>
        </tr>
      </thead>
      <tbody>
        <tr className="h-[18px] bg-[#4080ff] text-white *:border-r *:border-[#e8e8f2] *:p-0 *:pl-px">
          <td>MN</td>
          <td>D_1/0...</td>
        </tr>
        <tr className="h-[18px] bg-[#ccdaf6] *:border-r *:border-[#e8e8f2] *:p-0 *:pl-px">
          <td>MN</td>
          <td>D_1/0...</td>
        </tr>
      </tbody>
    </table>
    <div className="flex w-[18px] flex-col items-end bg-[#f2f2ff] pt-px">
      <ColumnsButton />
      <ScrollTrack />
    </div>
  </div>
);

const Navigator = () => (
  <aside className="ml-[5px] flex w-[182px] shrink-0 flex-col border-t border-l border-[#66666a] pr-[5px] pl-1.5">
    <div className="mb-0.5 flex h-4 items-center gap-[3px]">
      <span className="h-px w-[9px] bg-[#b0b0b4]" />
      <h2>Navigator</h2>
      <span className="h-px flex-1 bg-[#b0b0b4]" />
    </div>
    <SchoolTable />
    <div className="mt-2 h-[5px] shrink-0 border-t border-b border-t-white border-b-[#66666a]" />
    <div className="mt-[3px] flex h-[23px] items-center">
      <label htmlFor="filter" className="w-[42px]">Filter:</label>
      <Checkbox id="filter" disabled />
      <span className="ml-auto"><PanelButton>Auswählen</PanelButton></span>
    </div>
    <div className="flex h-[29px] items-center whitespace-nowrap">
      <span className="ml-0.5"><Checkbox id="archiviert" /></span>
      <label htmlFor="archiviert" className="ml-1">ausschließlich archivierte K...</label>
    </div>
    <div className="flex h-[23px] items-center">
      <label htmlFor="suche" className="w-[42px]">Suche:</label>
      <Checkbox id="suche" disabled />
      <span className="ml-auto"><PanelButton>Bearbeiten</PanelButton></span>
    </div>
    <div className="mt-1 mb-[5px] h-px shrink-0 bg-white" />
    <div className="relative flex min-h-0 flex-1 gap-[5px] border-b border-white">
      <SubjectTable />
      <CourseTable />
      <Badge className="top-[102px] left-[50px]">1</Badge>
    </div>
    <p className="flex h-4 shrink-0 items-center justify-center">Anzahl: 2</p>
  </aside>
);

const App = () => (
  <div className="flex h-screen flex-col overflow-hidden border-t border-r border-[#6b6b6b] bg-[#f2f2ff] font-['Noto_Sans','Open_Sans',sans-serif] text-[11px] leading-[15px] text-black">
    <TitleBar />
    <MenuBar />
    <MainToolbar />
    <div className="flex min-h-0 flex-1 flex-col border-t-2 border-l-3 border-t-[#85858c] border-l-[#8c93a3] pr-1">
      <ModuleTab />
      <div className="flex min-h-0 flex-1 flex-col border-r-2 border-[#a9b6d0]">
        <ModuleToolbar />
        <div className="flex min-h-0 flex-1">
          <main className="flex min-w-0 flex-1 flex-col overflow-hidden border-t border-r border-l border-t-[#66666a] border-r-white border-l-[#66666a]">
            <FilterRow />
            <ExamForm />
            <GradeTable />
          </main>
          <Navigator />
        </div>
      </div>
    </div>
  </div>
);

export default App;
